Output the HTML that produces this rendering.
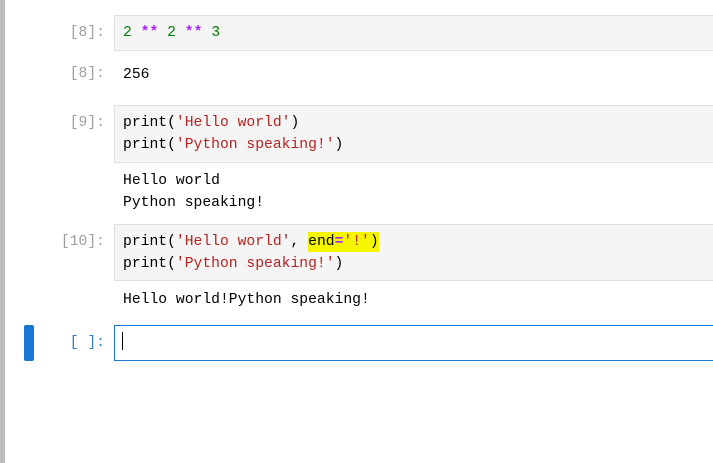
<!DOCTYPE html>
<html><head><style>
body{margin:0;width:713px;height:463px;background:#fff;position:relative;overflow:hidden;font-family:"Liberation Mono",monospace;font-size:14.7px;}
.bar{position:absolute;left:0;top:0;width:5px;height:463px;background:#bdbdbd;}
.p{position:absolute;right:608px;color:#9e9e9e;white-space:pre;}
.box{position:absolute;left:114px;width:605px;background:#f5f5f5;border:1px solid #e0e0e0;box-sizing:border-box;}
.t{position:absolute;left:123px;white-space:pre;color:#000;line-height:22px;}
.n{color:#008000}.o{color:#aa22ff;font-weight:bold}.s{color:#ba2121}
.hl{background:#f5f500;padding:2px 0}
</style></head><body>
<div class="bar"></div>
<div class="box" style="top:15px;height:36px"></div>
<div class="p" style="top:25px">[8]:</div>
<div class="t" style="top:22px"><span class="n">2</span> <span class="o">**</span> <span class="n">2</span> <span class="o">**</span> <span class="n">3</span></div>
<div class="p" style="top:66px">[8]:</div>
<div class="t" style="top:64px">256</div>
<div class="box" style="top:105px;height:58px"></div>
<div class="p" style="top:115px">[9]:</div>
<div class="t" style="top:112px">print(<span class="s">'Hello world'</span>)
print(<span class="s">'Python speaking!'</span>)</div>
<div class="t" style="top:170px">Hello world
Python speaking!</div>
<div class="box" style="top:224px;height:57px"></div>
<div class="p" style="top:234px">[10]:</div>
<div class="t" style="top:231px">print(<span class="s">'Hello world'</span>, <span class="hl">end<span class="o">=</span><span class="s">'!'</span>)</span>
print(<span class="s">'Python speaking!'</span>)</div>
<div class="t" style="top:289px">Hello world!Python speaking!</div>
<div style="position:absolute;left:24px;top:325px;width:10px;height:36px;background:#1976d2;border-radius:2px"></div>
<div class="box" style="top:325px;height:36px;background:#fff;border-color:#1976d2"></div>
<div class="p" style="top:335px;color:#307fc1">[ ]:</div>
<div style="position:absolute;left:122px;top:332px;width:1px;height:18px;background:#000"></div>
</body></html>
